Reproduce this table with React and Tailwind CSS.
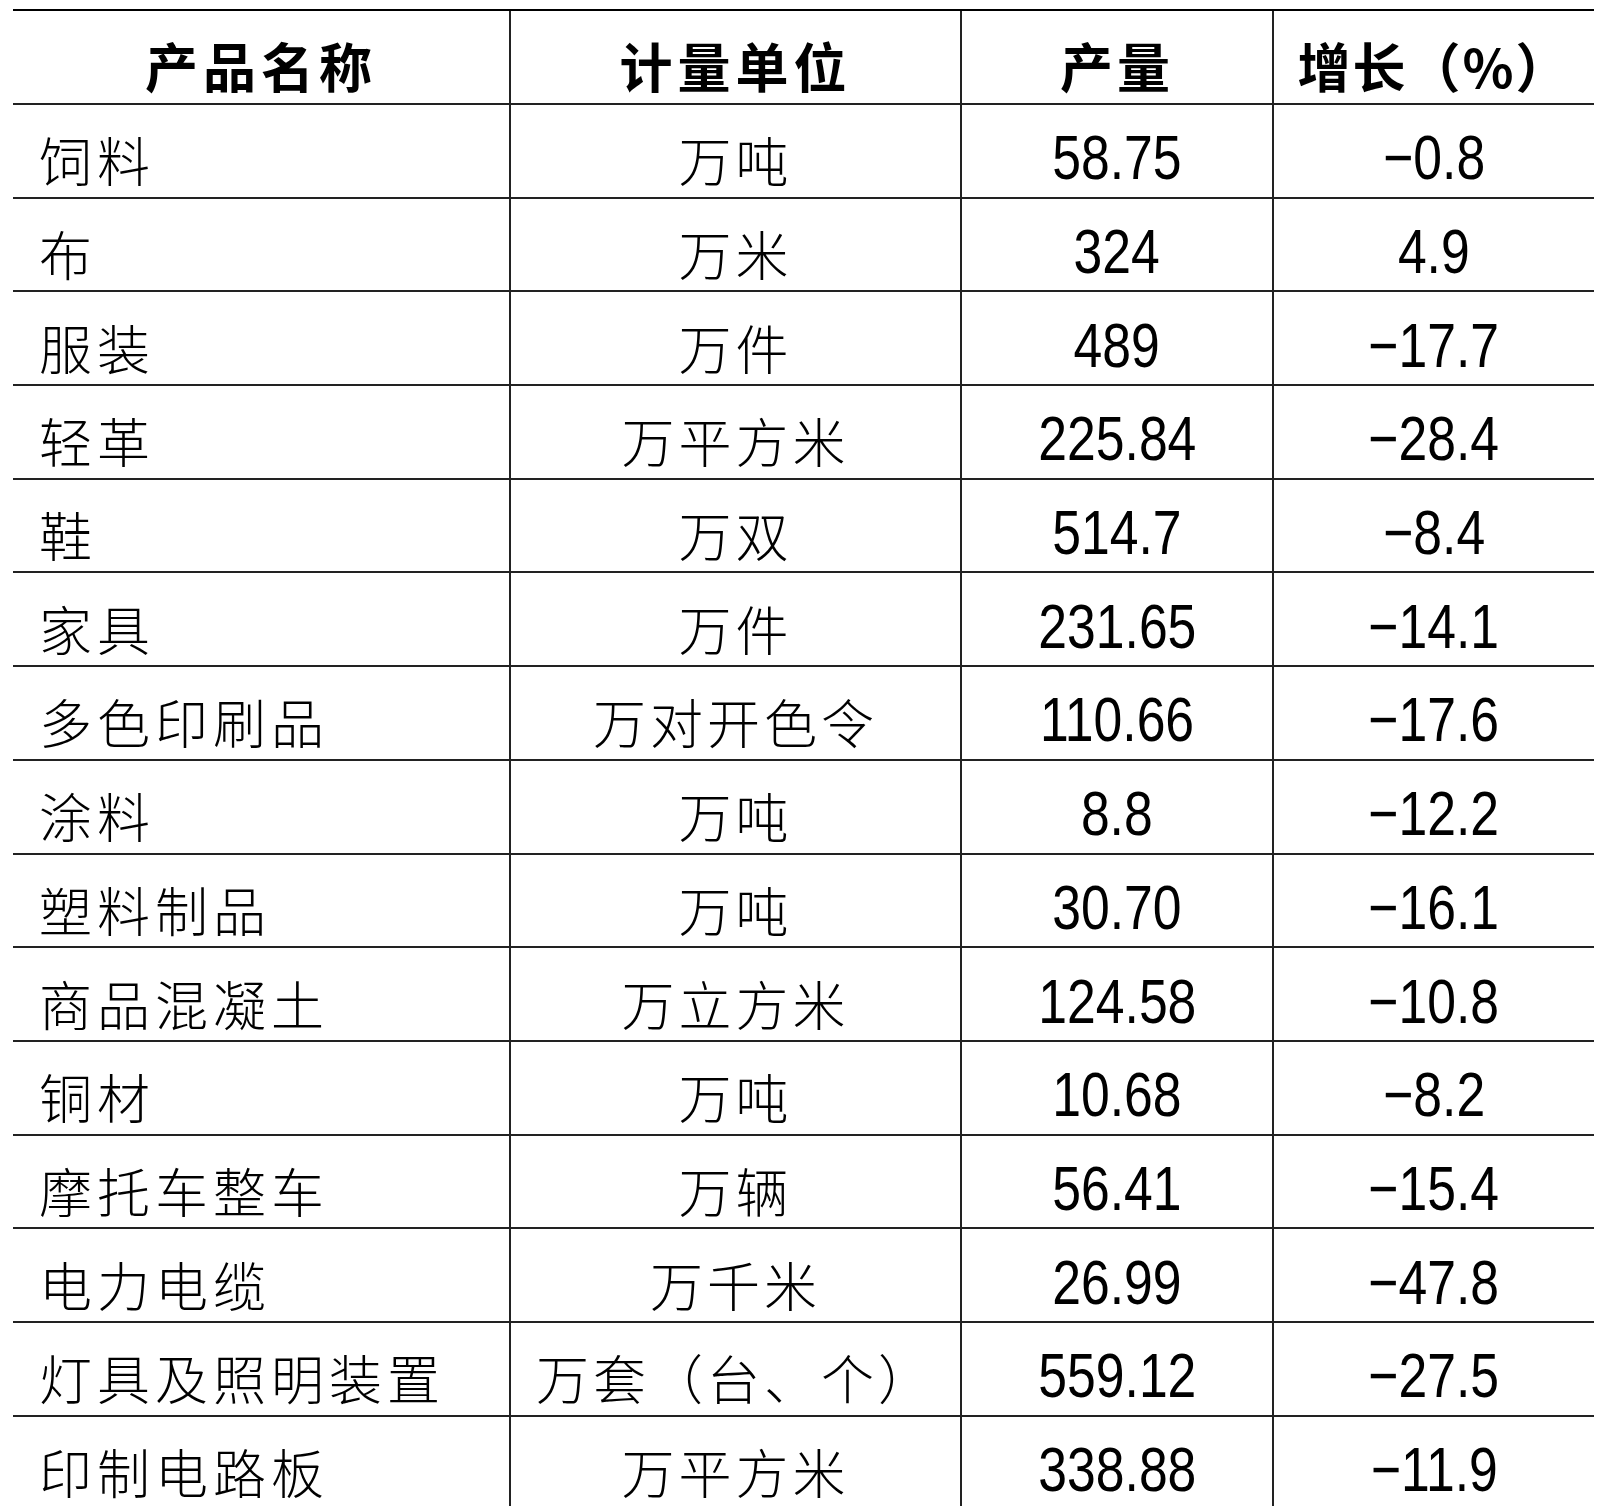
const rows = [
  ["饲料", "万吨", "58.75", "−0.8"],
  ["布", "万米", "324", "4.9"],
  ["服装", "万件", "489", "−17.7"],
  ["轻革", "万平方米", "225.84", "−28.4"],
  ["鞋", "万双", "514.7", "−8.4"],
  ["家具", "万件", "231.65", "−14.1"],
  ["多色印刷品", "万对开色令", "110.66", "−17.6"],
  ["涂料", "万吨", "8.8", "−12.2"],
  ["塑料制品", "万吨", "30.70", "−16.1"],
  ["商品混凝土", "万立方米", "124.58", "−10.8"],
  ["铜材", "万吨", "10.68", "−8.2"],
  ["摩托车整车", "万辆", "56.41", "−15.4"],
  ["电力电缆", "万千米", "26.99", "−47.8"],
  ["灯具及照明装置", "万套（台、个）", "559.12", "−27.5"],
  ["印制电路板", "万平方米", "338.88", "−11.9"],
];

const cjk = "font-['Noto_Sans_CJK_SC',sans-serif]";
const num = "font-['Liberation_Sans',sans-serif]";

const App = () => {
  return (
    <div className="min-h-screen bg-white text-black">
      <div className="ml-[13px] mt-[9px] w-[1581px] border-t-2 border-black">
        {/* header */}
        <div className="grid h-[94px] grid-cols-[496px_451px_312px_322px] border-b-2 border-[#222]">
          <div className={`flex items-center justify-center pt-4 text-[53px] font-bold leading-none tracking-[5px] ${cjk}`}>
            产品名称
          </div>
          <div className={`flex items-center justify-center border-l-2 border-[#222] pt-4 text-[53px] font-bold leading-none tracking-[5px] ${cjk}`}>
            计量单位
          </div>
          <div className={`flex items-center justify-center border-l-2 border-[#222] pt-4 text-[53px] font-bold leading-none tracking-[4px] ${cjk}`}>
            产量
          </div>
          <div className={`flex items-center justify-center border-l-2 border-[#222] pt-4 text-[53px] font-bold leading-none tracking-[2px] ${cjk}`}>
            增长（%）
          </div>
        </div>

        {rows.map(([name, unit, output, growth]) => (
          <div
            key={name}
            className="grid h-[93.7px] grid-cols-[496px_451px_312px_322px] border-b-2 border-[#222]"
          >
            <div className={`flex items-center pl-[26px] pt-[18px] text-[53px] font-light leading-none tracking-[5px] ${cjk}`}>
              {name}
            </div>
            <div className={`flex items-center justify-center border-l-2 border-[#222] pt-[18px] text-[53px] font-light leading-none tracking-[4px] ${cjk}`}>
              {unit}
            </div>
            <div className={`flex items-center justify-center border-l-2 border-[#222] pt-[14px] text-[63px] leading-none ${num}`}>
              <span className="inline-block scale-x-[0.82]">{output}</span>
            </div>
            <div className={`flex items-center justify-center border-l-2 border-[#222] pt-[14px] text-[63px] leading-none ${num}`}>
              <span className="inline-block scale-x-[0.82]">{growth}</span>
            </div>
          </div>
        ))}
      </div>
    </div>
  );
};

export default App;
